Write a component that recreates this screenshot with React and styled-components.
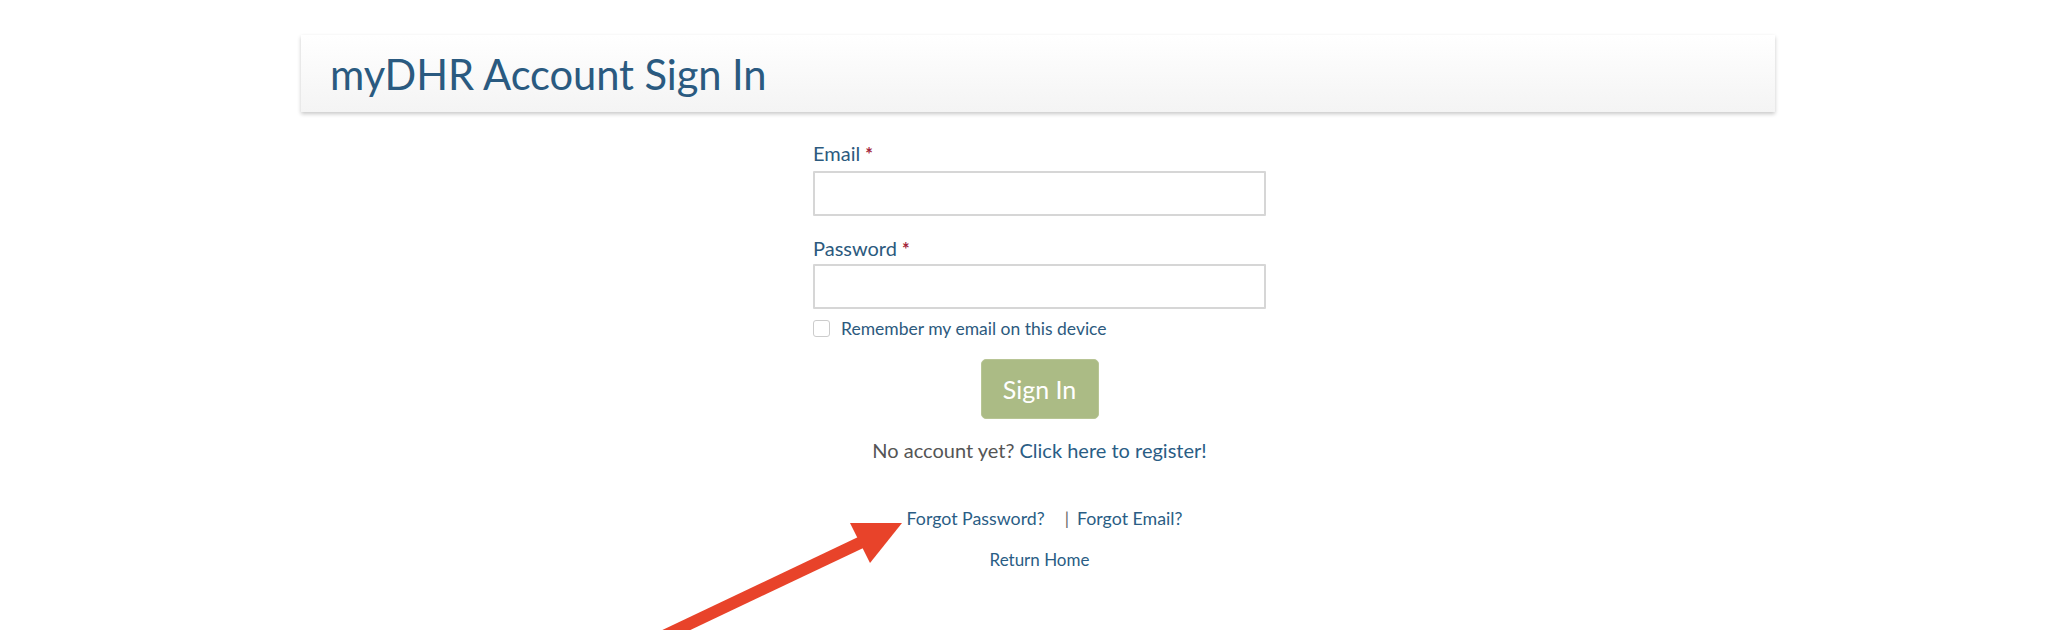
import React from 'react';
import styled, { createGlobalStyle } from 'styled-components';

const GlobalStyle = createGlobalStyle`
    html, body{
        margin: 0;
        padding: 0;
        background: #ffffff;
    }
    body{
        font-family: Lato, "Open Sans", "Liberation Sans", sans-serif;
        color: #2c5a7e;
    }
`

function App() {
    return (
        <>
            <GlobalStyle />
            <Page>
                <Container>
                    <Header>
                        <h1>myDHR Account Sign In</h1>
                    </Header>

                    <Form onSubmit={(e) => e.preventDefault()}>
                        <Field>
                            <Label>Email <Req>*</Req></Label>
                            <Input type='email' />
                        </Field>
                        <Field spacing={21}>
                            <Label>Password <Req>*</Req></Label>
                            <Input type='password' gap={4} />
                        </Field>
                        <Remember>
                            <Check type='checkbox' />
                            <span>Remember my email on this device</span>
                        </Remember>

                        <ButtonRow>
                            <SignInButton type='submit'>Sign In</SignInButton>
                        </ButtonRow>

                        <Register>
                            No account yet? <a href='#'>Click here to register!</a>
                        </Register>

                        <Links shift={10}>
                            <a href='#'>Forgot Password?</a>
                            <Divider>|</Divider>
                            <a href='#'>Forgot Email?</a>
                        </Links>
                        <Links top={20} size={17}>
                            <a href='#'>Return Home</a>
                        </Links>
                    </Form>
                </Container>

                {/* 안내용 빨간 화살표 */}
                <Arrow viewBox='0 0 2048 630' width='2048' height='630'>
                    <line x1='630' y1='652' x2='866' y2='540' stroke='#e8432a' strokeWidth='12' />
                    <polygon points='902,523 850,523 870,563' fill='#e8432a' />
                </Arrow>
            </Page>
        </>
    );
}

export default App;

const Page = styled.div`
    position: relative;
    width: 2048px;
    height: 630px;
    overflow: hidden;
    padding-top: 35px;
    box-sizing: border-box;
`

const Container = styled.div`
    margin-left: 301px;
    width: 1474px;
`

const Header = styled.div`
    height: 77px;
    box-sizing: border-box;
    display: flex;
    align-items: center;
    padding-left: 29px;
    background: linear-gradient(to bottom, #ffffff 0%, #f4f4f4 100%);
    box-shadow: 0 2px 4px rgba(0, 0, 0, 0.22);
    h1{
        margin: 0;
        font-weight: 400;
        font-size: 41.7px;
        color: #2a5a80;
        letter-spacing: -0.1px;
    }
`

const Form = styled.form`
    width: 453px;
    margin: 0 auto;
    padding-left: 3px;
    padding-top: 30px;
`

const Field = styled.div`
    display: flex;
    flex-direction: column;
    margin-top: ${({ spacing }) => (spacing ? `${spacing}px` : '0')};
`

const Label = styled.label`
    font-size: 20px;
    line-height: 22px;
    color: #2c5a7e;
    margin-bottom: 6px;
`

const Req = styled.span`
    color: #a3243b;
    font-weight: 700;
    font-size: 18px;
`

const Input = styled.input`
    width: 100%;
    height: 45px;
    box-sizing: border-box;
    border: 2px solid #d6d6d6;
    border-radius: 1px;
    outline: none;
    font-size: 16px;
    padding: 0 10px;
    margin-top: ${({ gap }) => (gap ? `-${gap - 2}px` : '0')};
`

const Remember = styled.label`
    display: flex;
    align-items: center;
    gap: 11px;
    margin-top: 9px;
    font-size: 17.5px;
    color: #2c5a7e;
`

const Check = styled.input`
    appearance: none;
    margin: 0;
    width: 17px;
    height: 17px;
    border: 1.5px solid #cccccc;
    border-radius: 3px;
    background: #ffffff;
`

const ButtonRow = styled.div`
    display: flex;
    justify-content: center;
    margin-top: 20px;
`

const SignInButton = styled.button`
    width: 118px;
    height: 60px;
    background: #abbb85;
    border: 1px solid #b8c595;
    border-radius: 5px;
    color: #ffffff;
    font-family: inherit;
    font-size: 25px;
    cursor: pointer;
`

const Register = styled.p`
    margin: 19px 0 0;
    text-align: center;
    font-size: 20px;
    color: #555555;
    a{
        color: #2a5d85;
        text-decoration: none;
    }
`

const Links = styled.div`
    display: flex;
    justify-content: center;
    align-items: center;
    gap: 12px;
    padding-left: ${({ shift }) => (shift ? `${shift}px` : '0')};
    margin-top: ${({ top }) => (top ? `${top}px` : '45px')};
    font-size: ${({ size }) => (size ? `${size}px` : '17.8px')};
    a{
        color: #2a5d85;
        text-decoration: none;
    }
`

const Divider = styled.span`
    color: #666666;
    font-size: 17px;
    margin-left: 8px;
    margin-right: -4px;
`

const Arrow = styled.svg`
    position: absolute;
    left: 0;
    top: 0;
    pointer-events: none;
`
